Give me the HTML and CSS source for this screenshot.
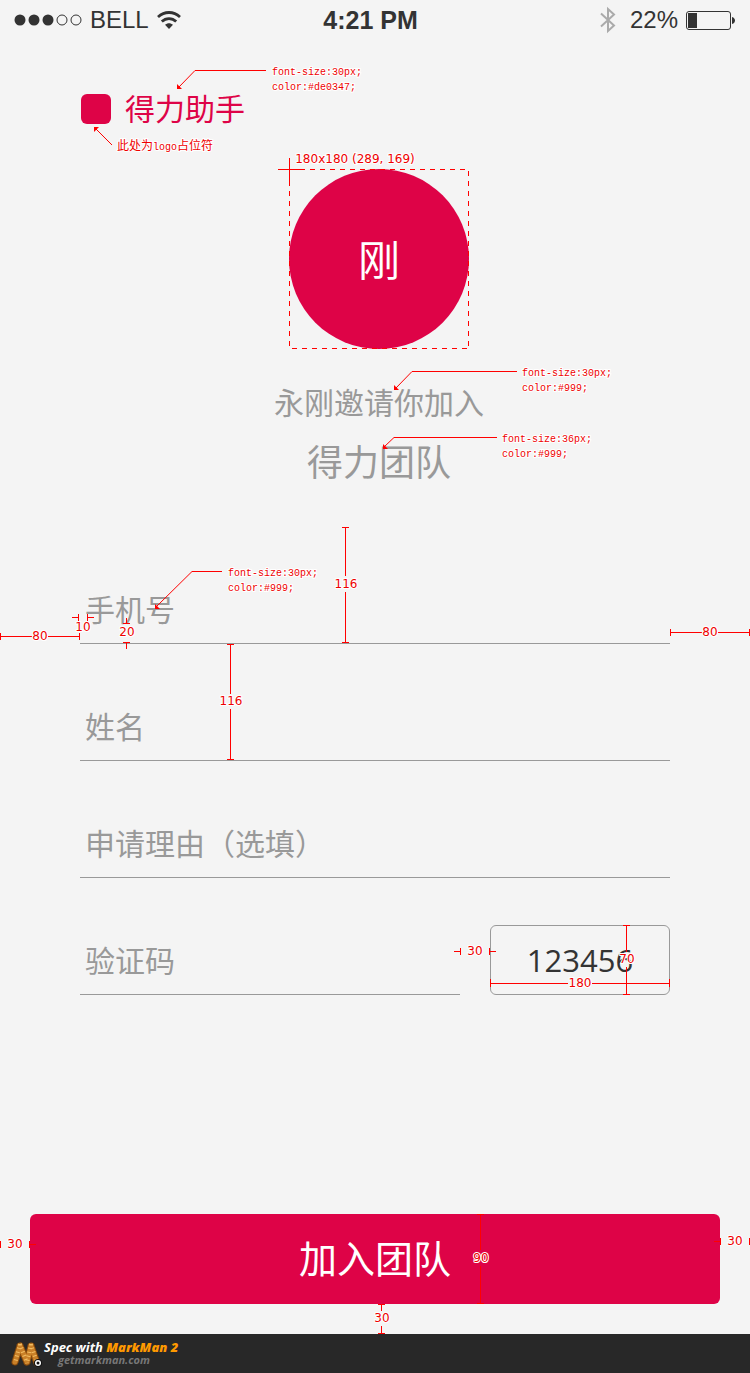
FILE: index.html
```html
<!DOCTYPE html>
<html lang="zh-CN">
<head>
<meta charset="utf-8">
<meta name="viewport" content="width=device-width, initial-scale=1">
<title>得力助手</title>
<link rel="stylesheet" href="styles.css">
</head>
<body>
<div class="page">
  <header class="status">
    <div class="status-left">
      <svg class="signal" width="68" height="12" viewBox="0 0 68 12" aria-hidden="true">
        <g fill="#333"><circle cx="6" cy="6" r="5.5"/><circle cx="20" cy="6" r="5.5"/><circle cx="34" cy="6" r="5.5"/></g>
        <g fill="none" stroke="#333"><circle cx="48" cy="6" r="5"/><circle cx="62" cy="6" r="5"/></g>
      </svg>
      <span>BELL</span>
      <svg class="wifi" width="24" height="18" viewBox="0 0 24 18" aria-hidden="true">
        <g fill="none" stroke="#333" stroke-width="2.8"><path d="M1 6C7.500 0 16.500 0 23 6"/><path d="M4.800 10.600C9 6.600 15 6.600 19.200 10.600"/></g>
        <path fill="#333" d="M8 13.800C10.500 11.600 13.500 11.600 16 13.800L12 18Z"/>
      </svg>
    </div>
    <span class="time">4:21 PM</span>
    <div class="status-right">
      <svg class="bluetooth" width="16" height="28" viewBox="0 0 16 28" aria-hidden="true"><path fill="none" stroke="#aaa" stroke-width="2" d="M1 7.500L14 19.500L8 25V3L14 8.500L1 20.500"/></svg>
      <span>22%</span>
      <svg class="battery" width="49" height="19" viewBox="0 0 49 19" aria-hidden="true">
        <rect x=".5" y=".5" width="44" height="18" rx="2.500" fill="none" stroke="#333"/>
        <rect x="2" y="2" width="9" height="15" fill="#333"/>
        <path d="M46 6C50 7 50 12 46 13Z" fill="#333"/>
      </svg>
    </div>
  </header>

  <main class="main">
    <div class="brand"><span class="logo"></span><h1 class="brand-name">得力助手</h1></div>
    <section class="invite">
      <div class="avatar">刚</div>
      <p class="inviter">永刚邀请你加入</p>
      <p class="team">得力团队</p>
    </section>
    <form class="form" id="join">
      <input class="field" type="tel" placeholder="手机号" aria-label="手机号">
      <input class="field" type="text" placeholder="姓名" aria-label="姓名">
      <input class="field" type="text" placeholder="申请理由（选填）" aria-label="申请理由（选填）">
      <div class="code-row">
        <input class="field" type="text" placeholder="验证码" aria-label="验证码">
        <button class="code" type="button">123456</button>
      </div>
    </form>
    <button class="submit" type="submit" form="join">加入团队</button>
  </main>

  <footer class="footer">
    <svg class="mark" width="34" height="30" viewBox="0 0 34 30" aria-hidden="true">
      <g fill="none" stroke-linecap="round">
        <g stroke="#8a4b0c" stroke-width="7"><path d="M10 6L5 22M10 6L17 22M21 6L17 22M21 6L27 23"/></g>
        <g stroke="#c98028" stroke-width="5"><path d="M10 6L5 22M10 6L17 22M21 6L17 22M21 6L27 23"/></g>
        <g stroke="#f2bd63" stroke-width="4" stroke-dasharray="1 3" stroke-linecap="butt"><path d="M10 4L5 23M10 4L17 23M21 4L17 23M21 4L27 23"/></g>
      </g>
      <circle cx="28" cy="23" r="4" fill="#111"/><circle cx="28" cy="23" r="3" fill="#fff"/><circle cx="28" cy="23" r="1.500" fill="#111"/>
    </svg>
    <div class="credit">
      <span class="credit-title">Spec with <b class="credit-name">MarkMan 2</b></span>
      <span class="credit-site">getmarkman.com</span>
    </div>
  </footer>

  <svg class="specs" viewBox="0 0 750 1373" preserveAspectRatio="xMidYMin meet">
    <g class="rule">
      <path d="M266 70.500H195L179 87"/><path d="M112 145L96 129"/>
      <path d="M517 371.500H412L396 388"/><path d="M497 437.500H394L384 447"/>
      <path d="M222 571.500H192L156 607"/>
    </g>
    <g class="head">
      <path d="M177 84V89H182Z"/><path d="M94 127H99L94 132Z"/><path d="M394 385V390H399Z"/><path d="M383 444V449H388Z"/><path d="M155 604V609H160Z"/>
    </g>
    <g class="edge">
      <rect x="289.500" y="169.500" width="179" height="179" stroke-dasharray="5 5"/>
      <path d="M278 169.500H304M289.500 158V184"/>
      <path d="M342 527.500H349M345.500 527V576M345.500 592V643M342 642.500H349"/>
      <path d="M227 644.500H234M230.500 644V694M230.500 709V760M227 759.500H234"/>
      <path d="M0 636.500H32M48 636.500H80M.5 633V640M79.500 633V640"/>
      <path d="M670 632.500H702M718 632.500H750M670.500 629V636M749.500 629V636"/>
      <path d="M72 617.500H78M78.500 614V621M87.500 614V621M88 617.500H94"/>
      <path d="M126.500 618V624M123 623.500H130M123 642.500H130M126.500 643V649"/>
      <path d="M454 951.500H460M460.500 948V955M489.500 948V955M490 951.500H496"/>
      <path d="M490.500 979V987M490 983.500H568M592 983.500H670M669.500 979V987"/>
      <path d="M623 925.500H630M626.500 925V952M626.500 967V994M623 994.500H630"/>
      <path d="M.5 1241V1248M29.500 1241V1248M30 1244.500H36"/>
      <path d="M714 1241.500H720M720.500 1238V1245M749.500 1238V1245"/>
      <path d="M477 1214.500H484M480.500 1214V1250M480.500 1266V1304M477 1303.500H484"/>
      <path d="M378 1304.500H385M381.500 1304V1311M381.500 1326V1334M378 1333.500H385"/>
    </g>
    <g class="note">
      <text x="272" y="75">font-size:30px;</text><text x="272" y="90">color:#de0347;</text>
      <text x="117" y="150"><tspan class="han">此处为</tspan>logo<tspan class="han">占位符</tspan></text>
      <text x="522" y="376">font-size:30px;</text><text x="522" y="391">color:#999;</text>
      <text x="502" y="442">font-size:36px;</text><text x="502" y="457">color:#999;</text>
      <text x="228" y="576">font-size:30px;</text><text x="228" y="591">color:#999;</text>
    </g>
    <g class="size">
      <text x="355" y="163">180x180 (289, 169)</text>
      <text x="346" y="588">116</text><text x="231" y="705">116</text>
      <text x="40" y="640">80</text><text x="710" y="636">80</text>
      <text x="83" y="631">10</text><text x="127" y="636">20</text>
      <text x="475" y="955">30</text><text x="580" y="987">180</text><text x="627" y="963">70</text>
      <text x="15" y="1248">30</text><text x="735" y="1245">30</text>
      <text x="481" y="1262">90</text><text x="382" y="1322">30</text>
    </g>
  </svg>
</div>
</body>
</html>
```
FILE: styles.css
```css
* { box-sizing: border-box; }

body {
  margin: 0;
  background: #f4f4f4;
  color: #999;
  font-family: "Noto Sans CJK SC", sans-serif;
  font-weight: 400;
}

.page {
  position: relative;
  display: flex;
  flex-direction: column;
  min-height: 100vh;
  overflow: hidden;
}

/* Status bar */
.status {
  display: grid;
  grid-template-columns: 1fr auto 1fr;
  align-items: center;
  height: 40px;
  padding: 0 15px 0 14px;
  color: #333;
  font: 24px "Liberation Sans", Arial, sans-serif;
}
.status-left, .status-right { display: flex; align-items: center; gap: 8px; }
.status-right { justify-content: flex-end; }
.bluetooth { margin-right: 6px; }
.time { font-size: 25px; font-weight: 700; margin-right: 8px; }

/* Content */
.main {
  flex: 1;
  display: flex;
  flex-direction: column;
  padding: 48px 30px 30px;
}

.brand {
  display: flex;
  align-items: center;
  gap: 14px;
  height: 42px;
  padding-left: 51px;
}
.logo { width: 30px; height: 30px; border-radius: 6px; background: #de0347; }
.brand-name {
  margin: 0;
  padding-bottom: 4px;
  color: #de0347;
  font-size: 30px;
  font-weight: 400;
  line-height: 38px;
}

.invite {
  display: flex;
  flex-direction: column;
  align-items: center;
  margin-top: 39px;
  padding-left: 8px;
}
.avatar {
  display: grid;
  place-items: center;
  width: 180px;
  height: 180px;
  padding-bottom: 4px;
  border-radius: 50%;
  background: #de0347;
  color: #fff;
  font-size: 42px;
}
.inviter, .team { margin: 0; }
.inviter { margin-top: 28px; font-size: 30px; line-height: 48px; }
.team { margin-top: 7px; font-size: 36px; line-height: 56px; }

.form { display: flex; flex-direction: column; margin: 39px 50px 0; }
.field {
  width: 100%;
  min-width: 0;
  height: 117px;
  padding: 45px 5px 0;
  border: 0;
  border-bottom: 1px solid #999;
  border-radius: 0;
  outline: 0;
  background: transparent;
  color: #333;
  font: inherit;
  font-size: 30px;
}
.field::placeholder { color: #999; opacity: 1; }
.code-row { display: flex; align-items: flex-end; gap: 30px; }
.code {
  flex: 0 0 180px;
  height: 70px;
  border: 1px solid #999;
  border-radius: 6px;
  background: transparent;
  color: #333;
  font: 31px "Open Sans", sans-serif;
}

.submit {
  height: 90px;
  margin-top: auto;
  padding: 0 0 6px;
  border: 0;
  border-radius: 6px;
  background: #de0347;
  color: #fff;
  font: inherit;
  font-size: 38px;
}

/* Footer */
.footer {
  display: flex;
  align-items: center;
  height: 39px;
  padding-left: 10px;
  background: #282828;
  color: #fff;
  font: italic 700 13px/14px "Open Sans", sans-serif;
}
.mark { margin-top: 2px; }
.credit { display: flex; flex-direction: column; padding-bottom: 2px; }
.credit-name { color: #f90; }
.credit-site { padding-left: 14px; color: #777; font-size: 11px; line-height: 12px; }

/* Measurement overlay */
.specs {
  position: absolute;
  top: 0;
  left: 0;
  width: 100%;
  height: 1373px;
  pointer-events: none;
}
.rule, .edge { fill: none; stroke: #f00; }
.edge { shape-rendering: crispEdges; }
.head { fill: #f00; }
.note, .size { fill: #e00; stroke: #fff; stroke-width: 2px; paint-order: stroke; font-weight: 400; }
.note { font-family: "Liberation Mono", monospace; font-size: 10px; }
.han { font-family: "Noto Sans CJK SC", sans-serif; font-size: 12px; }
.size { font-family: "DejaVu Sans", sans-serif; font-size: 12px; text-anchor: middle; }
```
